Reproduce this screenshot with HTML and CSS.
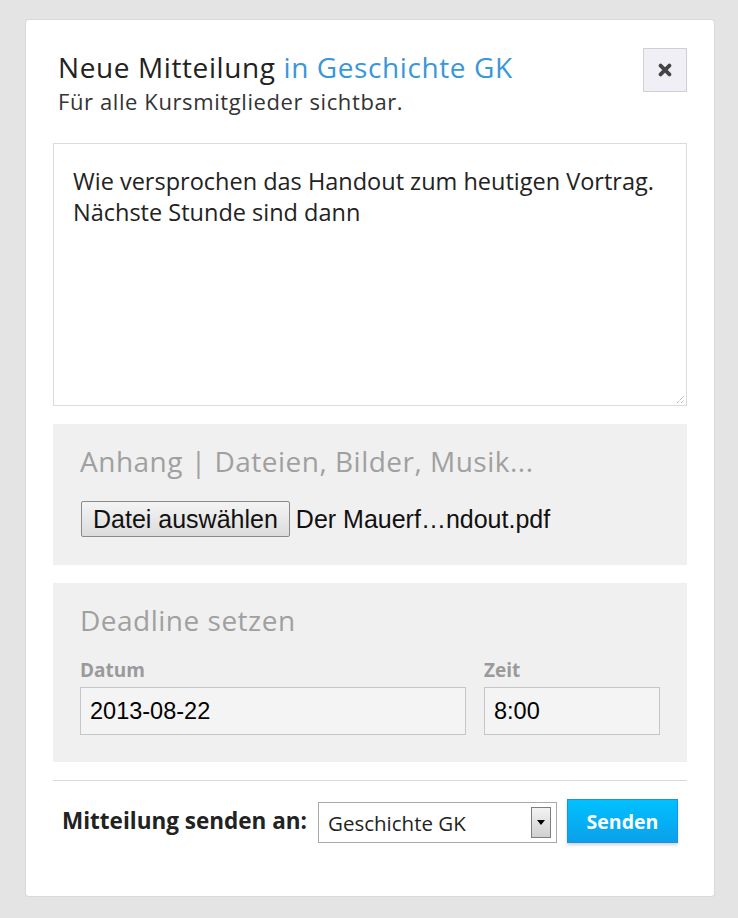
FILE: index.html
```html
<!DOCTYPE html>
<html lang="de">
<head>
<meta charset="utf-8">
<title>Neue Mitteilung</title>
<link rel="stylesheet" href="styles.css">
</head>
<body>
<div class="card">
  <div class="header">
    <div class="titles">
      <h1 class="title">Neue Mitteilung <span class="accent">in Geschichte GK</span></h1>
      <p class="subtitle">Für alle Kursmitglieder sichtbar.</p>
    </div>
    <button class="close" type="button" aria-label="Schließen">
      <svg width="14" height="14" viewBox="0 0 14 14"><path d="M2.6 2.6 L11.4 11.4 M11.4 2.6 L2.6 11.4" stroke="#444" stroke-width="3.8" stroke-linecap="round"/></svg>
    </button>
  </div>

  <div class="message">
    <div class="message-text">Wie versprochen das Handout zum heutigen Vortrag.<br>Nächste Stunde sind dann</div>
    <svg class="grip" width="9" height="9" viewBox="0 0 9 9"><path d="M1 8 L8 1 M5 8 L8 5" stroke="#888" stroke-width="1" stroke-dasharray="1 1"/></svg>
  </div>

  <div class="panel attach">
    <h2 class="panel-title">Anhang | Dateien, Bilder, Musik...</h2>
    <div class="file-row">
      <span class="file-btn">Datei auswählen</span>
      <span class="file-name">Der Mauerf…ndout.pdf</span>
    </div>
  </div>

  <div class="panel deadline">
    <h2 class="panel-title">Deadline setzen</h2>
    <div class="fields">
      <div class="field">
        <label class="field-label">Datum</label>
        <div class="field-input">2013-08-22</div>
      </div>
      <div class="field">
        <label class="field-label">Zeit</label>
        <div class="field-input">8:00</div>
      </div>
    </div>
  </div>

  <div class="footer">
    <span class="send-label">Mitteilung senden an:</span>
    <div class="select">
      <span class="select-text">Geschichte GK</span>
      <span class="select-arrow"><span class="tri"></span></span>
    </div>
    <button class="send" type="button">Senden</button>
  </div>
</div>
</body>
</html>
```

FILE: styles.css
```css
* { box-sizing: border-box; }
html, body { margin: 0; padding: 0; }
body {
  background: #e4e4e4;
  font-family: "Open Sans", "Noto Sans", sans-serif;
  color: #222;
  width: 738px;
  height: 918px;
  overflow: hidden;
}
.card {
  margin: 20px 0 0 26px;
  width: 688px;
  height: 876px;
  background: #fff;
  border-radius: 3px;
  box-shadow: 0 0 0 1px #d9d9d9;
  padding: 27px 27px 0 27px;
}
.header {
  display: flex;
  justify-content: space-between;
  align-items: flex-start;
  height: 96px;
}
.titles { padding: 3px 0 0 5px; }
.title {
  margin: 0;
  font-weight: 400;
  font-size: 28px;
  letter-spacing: 0.6px;
  line-height: 34px;
  color: #222;
}
.accent { color: #3a97da; }
.subtitle {
  margin: 2px 0 0 0;
  font-size: 22px;
  letter-spacing: 0.6px;
  line-height: 30px;
  color: #333;
}
.close {
  margin-top: 1px;
  width: 44px;
  height: 44px;
  background: #f0eff5;
  border: 1px solid #cfcfd6;
  display: flex;
  align-items: center;
  justify-content: center;
  padding: 0;
}
.message {
  position: relative;
  height: 263px;
  border: 1px solid #dcdcdc;
  padding: 22px 19px;
}
.message-text {
  font-size: 23.5px;
  line-height: 31px;
  color: #222;
}
.grip { position: absolute; right: 1px; bottom: 1px; }
.panel {
  background: #f0f0f0;
  margin-top: 18px;
  padding: 0 27px;
}
.panel-title {
  margin: 0;
  font-weight: 400;
  font-size: 28px;
  letter-spacing: 0.5px;
  line-height: 36px;
  color: #a0a0a0;
}
.attach { height: 141px; padding-top: 19px; }
.file-row {
  margin-top: 22px;
  display: flex;
  align-items: center;
  font-family: "Liberation Sans", Arial, sans-serif;
  font-size: 25px;
}
.file-btn {
  margin-left: 1px;
  height: 36px;
  line-height: 34px;
  padding: 0 11px;
  border: 1px solid #8a8a8a;
  border-radius: 2px;
  background: linear-gradient(#f4f4f4, #dcdcdc);
  color: #111;
}
.file-name { margin-left: 6px; color: #111; }
.deadline { height: 179px; padding-top: 19px; }
.fields {
  margin-top: 21px;
  display: grid;
  grid-template-columns: 386fr 176fr;
  column-gap: 18px;
}
.field { display: flex; flex-direction: column; }
.field-label {
  font-weight: 700;
  font-size: 19px;
  line-height: 22px;
  color: #9a9a9a;
  margin-bottom: 6px;
}
.field-input {
  height: 48px;
  border: 1px solid #c6c6c6;
  background: #f4f4f4;
  font-family: "Liberation Sans", Arial, sans-serif;
  font-size: 23.5px;
  line-height: 46px;
  padding: 0 9px;
  color: #000;
}
.footer {
  margin-top: 18px;
  border-top: 1px solid #d9d9d9;
  padding: 18px 9px 0 9px;
  display: flex;
  align-items: center;
}
.send-label {
  font-weight: 700;
  font-size: 22.5px;
  line-height: 30px;
  color: #222;
  margin-right: 11px;
}
.select {
  margin-top: 3px;
  width: 239px;
  height: 41px;
  border: 1px solid #a9a9a9;
  display: flex;
  align-items: center;
  justify-content: space-between;
  padding: 0 5px 0 9px;
  background: #fff;
}
.select-text { font-size: 20.5px; color: #222; }
.select-arrow {
  width: 20px;
  height: 31px;
  border: 1px solid #7e7e7e;
  background: linear-gradient(#f3f3f3, #d0d0d0);
  display: flex;
  align-items: center;
  justify-content: center;
}
.tri {
  width: 0; height: 0;
  border-left: 4px solid transparent;
  border-right: 4px solid transparent;
  border-top: 5px solid #000;
}
.send {
  margin-left: 10px;
  width: 111px;
  height: 44px;
  border: 1px solid #1e90e6;
  background: linear-gradient(#00c1ff, #0aa0ea);
  color: #fff;
  font-family: "Open Sans", sans-serif;
  font-weight: 700;
  font-size: 19.5px;
  box-shadow: 0 2px 3px rgba(0,0,0,0.18);
  padding: 0;
}
```
